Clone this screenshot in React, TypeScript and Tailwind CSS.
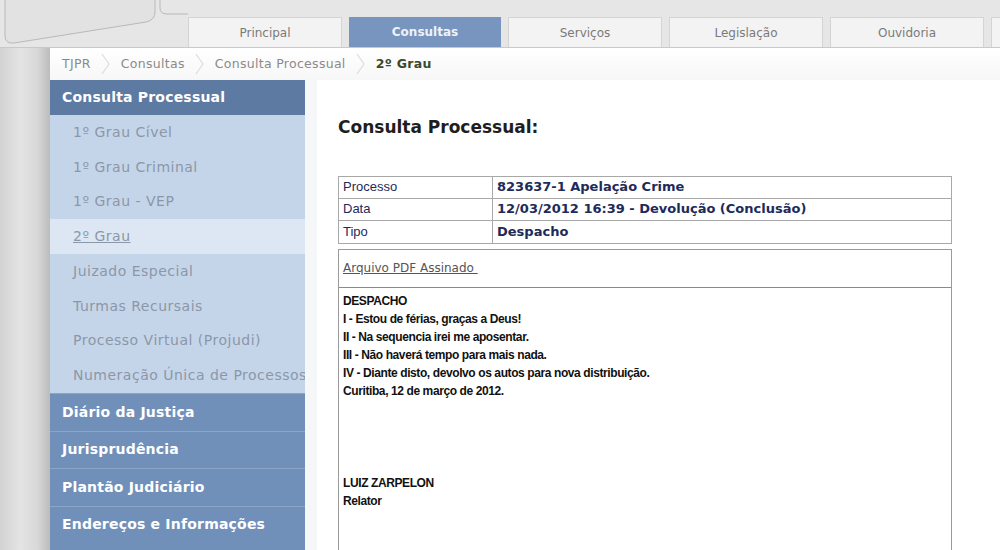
const tabs = ["Principal", "Consultas", "Serviços", "Legislação", "Ouvidoria", ""];

const subItems = [
  "1º Grau Cível",
  "1º Grau Criminal",
  "1º Grau - VEP",
  "2º Grau",
  "Juizado Especial",
  "Turmas Recursais",
  "Processo Virtual (Projudi)",
  "Numeração Única de Processos",
];

const sections = ["Diário da Justiça", "Jurisprudência", "Plantão Judiciário", "Endereços e Informações"];

const despacho = [
  "DESPACHO",
  "I - Estou de férias, graças a Deus!",
  "II - Na sequencia irei me aposentar.",
  "III - Não haverá tempo para mais nada.",
  "IV - Diante disto, devolvo os autos para nova distribuição.",
  "Curitiba, 12 de março de 2012.",
  "",
  "",
  "",
  "",
  "LUIZ ZARPELON",
  "Relator",
];

function Chevron() {
  return (
    <svg width="14" height="24" viewBox="0 0 14 24" className="mx-[8px]">
      <polyline points="3,2 10,12 3,22" fill="none" stroke="#dcdcdc" strokeWidth="1.2" />
    </svg>
  );
}

export default function App() {
  return (
    <div className="relative flex h-[550px] w-[1000px] flex-col overflow-hidden bg-white font-['DejaVu_Sans',sans-serif]">
      {/* top tab bar */}
      <div className="flex h-[47px] items-end bg-[#e6e6e6]">
        <div className="relative h-full w-[188px] shrink-0">
          <svg width="188" height="47" viewBox="0 0 188 47" className="absolute left-0 top-0">
            <path d="M5 0 V36 Q5 44 14 43 L146 22 Q155 20 155 12 V0" fill="#e2e2e2" stroke="#b9b9b9" strokeWidth="1" />
            <path d="M160 0 V8 Q160 14 167 14 H188" fill="none" stroke="#b9b9b9" strokeWidth="1" />
          </svg>
        </div>
        <div className="flex h-[30px] gap-[7px]">
          {tabs.map((t, i) =>
            t === "Consultas" ? (
              <div
                key={i}
                className="flex w-[152px] items-center justify-center bg-[#7795be] text-[12px] font-bold text-[#eef2f8]"
              >
                {t}
              </div>
            ) : (
              <div
                key={i}
                className="flex w-[154px] items-center justify-center border border-b-0 border-[#d4d4d4] bg-[#f3f3f3] text-[12px] text-[#7a7a7a]"
              >
                {t}
              </div>
            ),
          )}
        </div>
      </div>

      <div className="flex flex-1 border-t border-[#c9c9c9]">
        {/* left gray strip */}
        <div className="w-[50px] shrink-0 bg-[linear-gradient(to_right,#d2d2d2,#e4e4e4_40%,#d8d8d8_75%,#bcbcbc)]" />

        <div className="flex flex-1 flex-col">
          {/* breadcrumb */}
          <div className="flex h-[32px] items-center bg-[linear-gradient(to_bottom,#ffffff,#f7f7f7)] pl-[12px] text-[12.5px] tracking-[0.3px] text-[#8a8a8a]">
            <span>TJPR</span>
            <Chevron />
            <span>Consultas</span>
            <Chevron />
            <span>Consulta Processual</span>
            <Chevron />
            <span className="font-bold text-[#3c4a2c]">2º Grau</span>
          </div>

          <div className="flex flex-1">
            {/* sidebar */}
            <div className="flex w-[255px] shrink-0 flex-col">
              <div className="flex h-[35px] items-center bg-[#5d7aa2] pl-[12px] text-[14px] font-bold tracking-[0.2px] text-white">
                Consulta Processual
              </div>
              <div className="flex flex-col bg-[#c5d5e9]">
                {subItems.map((s) => (
                  <div
                    key={s}
                    className={
                      s === "2º Grau"
                        ? "flex h-[34.75px] items-center bg-[#dce7f3] pl-[23px] text-[14px] tracking-[0.5px] whitespace-nowrap text-[#8b97a8] underline"
                        : "flex h-[34.75px] items-center pl-[23px] text-[14px] tracking-[0.5px] whitespace-nowrap text-[#8b97a8]"
                    }
                  >
                    {s}
                  </div>
                ))}
              </div>
              <div className="flex flex-1 flex-col bg-[#7090ba]">
                {sections.map((s) => (
                  <div
                    key={s}
                    className="flex h-[37.5px] shrink-0 items-center border-t border-[#8ca5c7] pl-[12px] text-[14px] font-bold tracking-[0.2px] text-white"
                  >
                    {s}
                  </div>
                ))}
              </div>
            </div>

            <div className="w-[12px] shrink-0 bg-[#f6f7f9]" />

            {/* content */}
            <div className="flex flex-1 flex-col pl-[21px] pr-[48px]">
              <h1 className="mt-[35px] text-[17px] font-bold text-[#1e1e1e]">Consulta Processual:</h1>

              <table className="mt-[35px] w-full border-collapse border border-[#9a9a9a] font-['Liberation_Sans',sans-serif] text-[13px] text-[#1d2b5a]">
                <tbody>
                  <tr className="h-[22px]">
                    <td className="w-[154px] border border-[#a8a8a8] px-[4px]">Processo</td>
                    <td className="border border-[#a8a8a8] px-[4px] font-['DejaVu_Sans',sans-serif] font-bold">
                      823637-1 Apelação Crime
                    </td>
                  </tr>
                  <tr className="h-[22px]">
                    <td className="border border-[#a8a8a8] px-[4px]">Data</td>
                    <td className="border border-[#a8a8a8] px-[4px] font-['DejaVu_Sans',sans-serif] font-bold">
                      12/03/2012 16:39 - Devolução (Conclusão)
                    </td>
                  </tr>
                  <tr className="h-[23px]">
                    <td className="border border-[#a8a8a8] px-[4px]">Tipo</td>
                    <td className="border border-[#a8a8a8] px-[4px] font-['DejaVu_Sans',sans-serif] font-bold">
                      Despacho
                    </td>
                  </tr>
                </tbody>
              </table>

              <div className="mt-[5px] flex flex-1 flex-col border border-b-0 border-[#9a9a9a]">
                <div className="flex h-[38px] items-center border-b border-[#8a8a8a] px-[4px] text-[12px] text-[#555]">
                  <span className="underline">Arquivo PDF Assinado&nbsp;</span>
                </div>
                <div className="px-[4px] pt-[4px] font-['Liberation_Sans',sans-serif] text-[12px] leading-[18px] font-bold tracking-[-0.4px] text-[#111]">
                  {despacho.map((l, i) => (
                    <div key={i} className={i === 10 ? "mt-[2px] h-[18px]" : "h-[18px]"}>
                      {l}
                    </div>
                  ))}
                </div>
              </div>
            </div>
          </div>
        </div>
      </div>
    </div>
  );
}
